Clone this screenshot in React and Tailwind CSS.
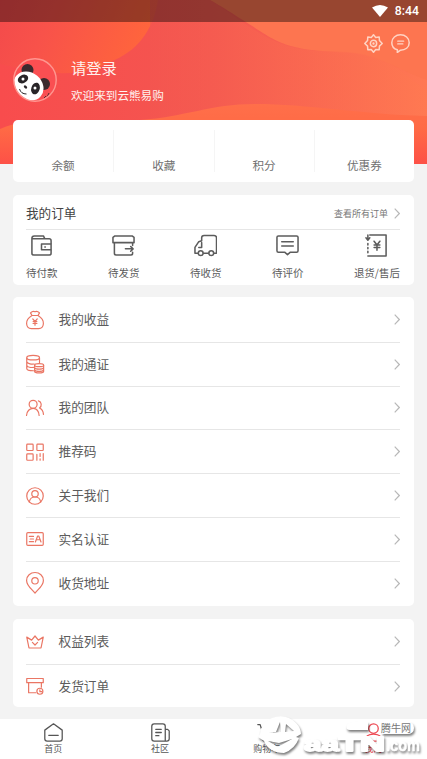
const stats = ['余额', '收藏', '积分', '优惠券']

function Svg({ children, className, box = '0 0 24 24' }) {
    return (
        <svg
            viewBox={box}
            className={className}
            fill="none"
            stroke="currentColor"
            strokeWidth="1.6"
            strokeLinecap="round"
            strokeLinejoin="round"
        >
            {children}
        </svg>
    )
}

// Order status icons
const orders = [
    {
        label: '待付款',
        icon: (
            <>
                <path d="M2 4.500V20q0 2 2 2h16q2 0 2-2v-3M2 4.500Q2 2 4.500 2H14l1.500 3H20q2 0 2 2v3M2 5h14" />
                <path d="M22 10.500H12v6h10zM15.500 13.500h.5" />
            </>
        ),
    },
    {
        label: '待发货',
        icon: (
            <>
                <path d="M3 2h18l2 1.500V9H1V3.500zM2.500 9v11q0 2 2 2h15q2 0 2-2v-1M21.500 9v3" />
                <path d="M14 15.500h8M19.500 13l2.500 2.500-2.500 2.500" />
            </>
        ),
    },
    {
        label: '待收货',
        icon: (
            <>
                <path d="M8 7V4q0-2.500 2.500-2.500H21q2.500 0 2.500 2.500v16H21M4 20H1v-6l4-6 3-1M8 9v5H5M10 20h5" />
                <circle cx="7" cy="20" r="2.500" />
                <circle cx="18" cy="20" r="2.500" />
            </>
        ),
    },
    {
        label: '待评价',
        icon: <path d="M2.500 2h19q1.500 0 1.500 1.500v14q0 1.500-1.500 1.500H15l-3 2.500L9 19H2.500Q1 19 1 17.500v-14Q1 2 2.500 2zM6 8h12M6 12.500h12" />,
    },
    {
        label: '退货/售后',
        icon: (
            <>
                <path d="M5 1h17v22H3" />
                <path d="M3 10v12" strokeDasharray="1.500 2.500" />
                <path d="M3 1v5M1 4l2 2.500L5 4M9.500 7.500l3 4 3-4M12.500 11.500V17M9.500 11.500h6M9.500 14h6" />
            </>
        ),
    },
]

const services = [
    {
        label: '我的收益',
        icon: (
            <>
                <path d="M8 6 6 2.500Q9-.5 12 1q3-1.500 6 1.500L16 6zM8 6C3 9 .5 13 .8 17c.4 4 3 6.500 6.200 6.500h10c3.200 0 5.800-2.500 6.200-6.500.3-4-2.200-8-7.200-11" />
                <path d="m9 10.500 3 3.500 3-3.500M12 14v5M9.500 14h5M9.500 16.500h5" />
            </>
        ),
    },
    {
        label: '我的通证',
        icon: (
            <>
                <ellipse cx="9.500" cy="3.500" rx="8.500" ry="3" />
                <path d="M1 4v14c0 2 5 3 9 3M18 4v6M1 9c1 3 7 3.500 10 3M1 14c1 2.500 6 3 9 2.500" />
                <ellipse cx="17.500" cy="13.500" rx="6" ry="2" />
                <path d="M11.500 13.500V22c0 2.500 12 2.500 12 0v-8.500M11.500 17c1 2.500 11 2.500 12 0M11.500 20c1 2.500 11 2.500 12 0" />
            </>
        ),
    },
    {
        label: '我的团队',
        icon: (
            <>
                <circle cx="9.500" cy="7" r="5.300" />
                <path d="M.7 22C1 16 5 12.500 9.500 12.500c4.500 0 7.500 3.500 8 9.500M16.500 2.500c4.500 1 5 7 1.500 9.500 3.500 1.500 5 4.500 5.300 8.500" />
            </>
        ),
    },
    {
        label: '推荐码',
        icon: (
            <>
                <rect x="1" y="1.500" width="8.500" height="8.500" rx="1" />
                <rect x="14.500" y="1.500" width="8.500" height="8.500" rx="1" />
                <rect x="1" y="14.500" width="8.500" height="8.500" rx="1" />
                <path d="M14.500 15v8M18.800 14v4M18.800 21v2M23 14v9" />
            </>
        ),
    },
    {
        label: '关于我们',
        icon: (
            <>
                <circle cx="12" cy="12" r="11" />
                <circle cx="12" cy="9" r="4.300" />
                <path d="M4.500 20c.5-4.500 3.500-6.700 7.500-6.700s7 2.200 7.500 6.700" />
            </>
        ),
    },
    {
        label: '实名认证',
        icon: (
            <>
                <rect x="1" y="3.500" width="22" height="17" rx="1.500" />
                <path d="M4.500 8.500H10M5.500 12H10M4.500 15.500H10M12.500 16l3-8h1.500l3 8M13.800 13h5" />
            </>
        ),
    },
    {
        label: '收货地址',
        icon: (
            <>
                <path d="M12 25.500C8 20.500 .8 15.500 .8 8.500a11.200 10.500 0 0 1 22.400 0c0 7-7.200 12-11.200 17z" />
                <circle cx="12" cy="9" r="4.300" />
            </>
        ),
    },
]

const extras = [
    {
        label: '权益列表',
        icon: <path d="M1 5.500 4 20h16l3-14.500-6.500 4L12 4 7.500 9.500zM8.500 12.500l3.500 3.500 3.500-3.500" />,
    },
    {
        label: '发货订单',
        icon: (
            <>
                <path d="M1 2h22v5.500H1zM3.500 7.500V21H13M20.500 7.500v6" />
                <circle cx="18.500" cy="19" r="4" />
                <path d="M18.500 17v2.500H21" />
            </>
        ),
    },
]

function Chevron() {
    return (
        <svg viewBox="0 0 6 11" className="h-[11px] w-1.5 text-[#b8b8b8]" fill="none" stroke="currentColor" strokeWidth="1.200">
            <path d="m.7.700 4.600 4.800-4.600 4.800" />
        </svg>
    )
}

function MenuCard({ items, className }) {
    return (
        <section className={`rounded-[5px] bg-white pl-[13px] pr-[14px] pt-px ${className}`}>
            {items.map((item, i) => (
                <div
                    key={item.label}
                    className={`flex h-[43.8px] items-center ${i > 0 ? 'border-t border-[#e6e6e6]' : ''}`}
                >
                    <Svg className="h-[18px] w-[18px] overflow-visible text-[#ea7664]">{item.icon}</Svg>
                    <span className="-mt-px ml-[14.500px] flex-1 text-[12.700px] leading-4 text-[#5c5c5c]">{item.label}</span>
                    <Chevron />
                </div>
            ))}
        </section>
    )
}

function Panda() {
    return (
        <svg viewBox="0 0 44 44" className="h-11 w-11">
            <defs>
                <clipPath id="avatar">
                    <circle cx="22" cy="22" r="21" />
                </clipPath>
            </defs>
            <circle cx="22" cy="22" r="21" fill="#fa4f52" />
            <g clipPath="url(#avatar)">
                <circle cx="14.500" cy="12" r="6" fill="#3a2a2e" />
                <circle cx="31" cy="26" r="6" fill="#3a2a2e" />
                <ellipse cx="15.500" cy="28" rx="16" ry="13.500" transform="rotate(40 15.500 28)" fill="#fff" />
                <ellipse cx="10" cy="21" rx="4" ry="5.500" transform="rotate(62 10 21)" fill="#292528" />
                <ellipse cx="22.500" cy="30.500" rx="4.200" ry="6" transform="rotate(18 22.500 30.500)" fill="#292528" />
                <circle cx="10" cy="21" r="1.500" fill="#fff" />
                <circle cx="22" cy="30" r="1.500" fill="#fff" />
                <ellipse cx="12.500" cy="29" rx="1.900" ry="1.300" transform="rotate(40 12.500 29)" fill="#292528" />
                <path d="M6.500 31q1.500 5 7 5" stroke="#292528" fill="none" />
                <path d="m31 40 2-2m1 1 2-4" stroke="#513033" />
            </g>
            <circle cx="22" cy="22" r="21.200" fill="none" stroke="#ff9690" strokeWidth="1.400" />
        </svg>
    )
}

function Header() {
    return (
        <header className="relative h-[164px] overflow-hidden text-white">
            {/* Wavy background */}
            <svg viewBox="0 0 427 164" className="absolute inset-0 h-full w-full" preserveAspectRatio="none">
                <defs>
                    <linearGradient id="base" x1="0" x2="1">
                        <stop offset="0" stopColor="#f84c4d" />
                        <stop offset=".5" stopColor="#f45650" />
                        <stop offset="1" stopColor="#ff7853" />
                    </linearGradient>
                    <linearGradient id="blob" x1="0" y1="0" x2="1" y2="0.200">
                        <stop offset="0" stopColor="#f34a4b" />
                        <stop offset=".35" stopColor="#f8524a" />
                        <stop offset="1" stopColor="#ff653c" />
                    </linearGradient>
                    <linearGradient id="ridge" x1="0" x2="1">
                        <stop offset="0" stopColor="#f35650" />
                        <stop offset="1" stopColor="#ff7951" />
                    </linearGradient>
                    <linearGradient id="front" x1="0" x2="0" y1="0" y2="1">
                        <stop offset="0" stopColor="#ff6f4a" />
                        <stop offset=".4" stopColor="#ff6a45" />
                        <stop offset="1" stopColor="#fd5147" />
                    </linearGradient>
                </defs>
                <path d="M0 0h427v164H0z" fill="url(#base)" />
                <path d="M0 0h158C153 32 136 52 110 62 84 77 50 76 0 64z" fill="url(#blob)" />
                <path d="M210 0h217v80c-27-9-40-22-76-27-63-3-70-8-102-29-16-10-28-18-39-24z" fill="#fd7550" />
                <path d="M210 0c32 20 55 43 91 49 31 5 54-2 85 13 16 8 27 20 41 28v74H150V0z" fill="url(#ridge)" opacity=".65" />
                <path d="M0 129c30-14 80-6 140-9 45-3 70-16 115-16 55 0 100 10 172 12v48H0z" fill="url(#front)" />
            </svg>

            {/* Status bar */}
            <div className="relative flex h-[22px] items-center justify-end bg-black/40 pr-2 text-[12.300px] font-medium">
                <svg viewBox="0 0 16 12" className="mr-[7px] h-3 w-4" fill="white">
                    <path d="M0 2.500Q8-2.500 16 2.500L8 12z" />
                </svg>
                <span className="font-[Roboto,sans-serif]">8:44</span>
            </div>

            <div className="relative flex justify-end gap-2 pr-[17px] pt-3 text-[#ffd3c3]">
                <Svg className="h-[19px] w-[19px]">
                    <path d="m12 1 2.800 3.300 4.400-.5.300 4.400L23 12l-3.500 3.300-.3 4.500-4.400-.3L12 23l-2.800-3.500-4.400.3-.3-4.500L1 12l3.500-3.800.3-4.400 4.400.5z" strokeWidth="1.900" />
                    <circle cx="12" cy="12" r="4" strokeWidth="1.900" />
                    <circle cx="12" cy="12" r=".7" />
                </Svg>
                <Svg className="h-[19px] w-[19px]">
                    <path d="M8 20C3 18.500 1 15 1 11 1 5 6 1 12 1s11 4 11 10-5 9.500-11 9.500l-4 2.800z" strokeWidth="1.900" />
                    <path d="M8.500 9H16M8.500 12.500H15" />
                </Svg>
            </div>

            <div className="relative ml-[13px] mt-1 flex items-center">
                <Panda />
                <div className="ml-3.5 text-[#fff1ee]">
                    <p className="text-[15.300px] leading-5">请登录</p>
                    <p className="mt-2.5 text-[11.600px] leading-4">欢迎来到云熊易购</p>
                </div>
            </div>
        </header>
    )
}

function TabBar() {
    return (
        <nav className="mt-3 grid h-10 grid-cols-4 bg-white text-center text-[9px] leading-3 text-[#555]">
            <div className="flex flex-col items-center pt-1">
                <Svg className="h-[19px] w-[19px]">
                    <path d="M1 9 12 1l11 8v11q0 3-3 3H4q-3 0-3-3zM6 15.500h12" />
                </Svg>
                <span className="mt-px">首页</span>
            </div>
            <div className="flex flex-col items-center pt-1">
                <Svg className="h-[19px] w-[19px]">
                    <path d="M4 1h11q3 0 3 3v19H4q-3 0-3-3V4q0-3 3-3zM18 8h3l2 2v10q0 3-3 3h-2M6 8h7M6 12h7M6 16h4" />
                </Svg>
                <span className="mt-px">社区</span>
            </div>
            <div className="flex flex-col items-center pt-1">
                <Svg className="h-[19px] w-[19px]">
                    <path d="M1 2h3l4 14h12l3-10H5" />
                    <circle cx="9" cy="21" r="1.500" />
                    <circle cx="18" cy="21" r="1.500" />
                </Svg>
                <span className="mt-px">购物车</span>
            </div>
            <div className="flex flex-col items-center pt-1 text-[#ed4852]">
                <Svg className="h-[19px] w-[19px]">
                    <circle cx="12" cy="7" r="6" />
                    <path d="M1 23c0-6 5-9 11-9s11 3 11 9z" />
                </Svg>
                <span className="mt-px">我的</span>
            </div>
        </nav>
    )
}

// Site badge floating over the tab bar
function Watermark() {
    return (
        <div className="absolute bottom-0 right-0 h-[45px] w-[172px]">
            <svg viewBox="0 0 172 45" className="h-full w-full drop-shadow-[1px_2px_1px_rgba(0,0,0,0.5)]">
                <path
                    fill="#fff"
                    fillRule="evenodd"
                    d="M5 20Q6 8 17 4q14-5 24 5 5 5 5 11l-5 3 3 1q-4 11-15 15-15 0-20-12l-6-4zM14 19l7-1 4-10 1 10zM30 18l1-8 8 7zM13 27l10 6 14-8-13 4z"
                />
                <path fill="#fff" d="M92 11q4-4 10-3h11v8H95q-5 0-3-5zM127 8h25q7 0 7 6t-7 6h-25z" />
                <g
                    fill="#fff"
                    stroke="#fff"
                    strokeWidth="1.800"
                    strokeLinejoin="round"
                    fontFamily="Liberation Sans, sans-serif"
                    fontWeight="bold"
                >
                    <text x="49" y="37" fontSize="21" textLength="35" lengthAdjust="spacingAndGlyphs">aa</text>
                    <text x="84" y="37" fontSize="20" textLength="46" lengthAdjust="spacingAndGlyphs">TN</text>
                    <text x="131" y="37" fontSize="16" strokeWidth=".4" textLength="34" lengthAdjust="spacingAndGlyphs">.com</text>
                </g>
            </svg>
            <span className="absolute left-[126px] top-[7px] text-[10px] leading-[14px] text-[#777]">腾牛网</span>
        </div>
    )
}

export default function App() {
    return (
        <div className="relative h-[759px] w-[427px] overflow-hidden bg-[#f3f3f3] font-['Noto_Sans_CJK_SC','Noto_Sans',sans-serif]">
            <Header />

            <main className="relative -mt-11 px-[13px]">
                <section className="grid h-[62px] grid-cols-4 rounded-[5px] bg-white pt-2.5 text-center text-[11.600px] leading-4 text-[#707070]">
                    {stats.map((label, i) => (
                        <div
                            key={label}
                            className={`flex h-[42px] items-end justify-center ${i > 0 ? 'border-l border-[#f5f5f5]' : ''}`}
                        >
                            <span className="-mb-px">{label}</span>
                        </div>
                    ))}
                </section>

                {/* My orders */}
                <section className="mt-[13px] h-[90px] rounded-[5px] bg-white pl-[13px] pr-[14px]">
                    <div className="flex h-[35px] items-center border-b border-[#e6e6e6] pt-[3px]">
                        <h2 className="flex-1 text-[12.600px] text-[#444]">我的订单</h2>
                        <span className="mr-1.5 text-[9px] text-[#777]">查看所有订单</span>
                        <Chevron />
                    </div>
                    <div className="flex justify-between pt-1">
                        {orders.map((order) => (
                            <div key={order.label} className="flex flex-col items-center text-[#5c5c5c]">
                                <Svg className="h-[23px] w-[23px]">{order.icon}</Svg>
                                <span className="mt-2 text-[10.500px] leading-4">{order.label}</span>
                            </div>
                        ))}
                    </div>
                </section>

                <MenuCard items={services} className="mt-3 h-[309px]" />
                <MenuCard items={extras} className="mt-[13px] h-[88px]" />
            </main>

            <TabBar />
            <Watermark />
        </div>
    )
}
